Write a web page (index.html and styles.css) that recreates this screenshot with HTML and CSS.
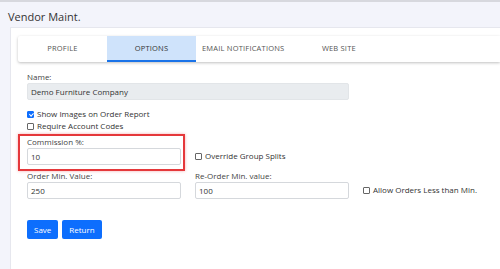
FILE: index.html
```html
<!DOCTYPE html>
<html lang="en">
<head>
    <meta charset="UTF-8">
    <meta name="viewport" content="width=device-width, initial-scale=1.0">
    <title>Vendor Maint.</title>
    <link rel="stylesheet" href="styles.css">
</head>
<body>
    <div class="topbar"></div>
    <h1>Vendor Maint.</h1>
    <div class="card">
        <div class="tabs">
            <div class="tab">Profile</div>
            <div class="tab active">Options</div>
            <div class="tab">Email Notifications</div>
            <div class="tab">Web Site</div>
        </div>
        <form class="form">
            <div class="field wide">
                <label>Name:</label>
                <input type="text" value="Demo Furniture Company" disabled>
            </div>
            <div class="checks">
                <label class="check"><input type="checkbox" checked> Show Images on Order Report</label>
                <label class="check"><input type="checkbox"> Require Account Codes</label>
            </div>
            <div class="grid">
                <div class="field highlight">
                    <label>Commission %:</label>
                    <input type="text" value="10">
                </div>
                <label class="check inline"><input type="checkbox"> Override Group Splits</label>
                <div></div>

                <div class="field">
                    <label>Order Min. Value:</label>
                    <input type="text" value="250">
                </div>
                <div class="field">
                    <label>Re-Order Min. value:</label>
                    <input type="text" value="100">
                </div>
                <label class="check inline"><input type="checkbox"> Allow Orders Less than Min.</label>
            </div>
            <div class="buttons">
                <button type="button">Save</button>
                <button type="button">Return</button>
            </div>
        </form>
    </div>
</body>
</html>
```

FILE: styles.css
```css
body {
    font-family: "Open Sans", "Liberation Sans", sans-serif;
    margin: 0;
    padding: 0;
    height: 269px;
    overflow: hidden;
    background-color: #f3f4fb;
    color: #333;
}
.topbar {
    height: 2px;
    background: #d7d8de;
}
h1 {
    margin: 0;
    padding: 0 8px;
    height: 25px;
    line-height: 30px;
    font-size: 11px;
    font-weight: normal;
    color: #333;
}
.card {
    margin-left: 10px;
    height: 242px;
    background: #fff;
    border-top: 1px solid #e6e7ee;
    border-left: 1px solid #e6e7ee;
    padding: 8px 0 0 7px;
    box-sizing: border-box;
}
.tabs {
    display: flex;
    height: 26px;
    background: #fff;
    border-radius: 2px 0 0 2px;
    box-shadow: 0 1px 3px rgba(0,0,0,0.25);
}
.tab {
    min-width: 77px;
    padding: 0 6px;
    text-align: center;
    line-height: 25px;
    font-size: 7.5px;
    text-transform: uppercase;
    letter-spacing: 0.2px;
    color: #555;
    border-bottom: 2px solid transparent;
    box-sizing: content-box;
}
.tab:last-child {
    min-width: 85px;
}
.tab.active {
    background: #cfe3fb;
    color: #333;
    border-bottom-color: #1a73e8;
}
.form {
    padding: 10px 0 0 9px;
}
.field {
    display: flex;
    flex-direction: column;
    width: 154px;
}
.field.wide {
    width: 322px;
}
.field label {
    font-size: 8px;
    line-height: 10px;
    margin-bottom: 1px;
    color: #444;
}
.field input {
    height: 17px;
    padding: 0 3px;
    border: 1px solid #d5d8dc;
    border-radius: 2px;
    box-sizing: border-box;
    font-family: inherit;
    font-size: 8px;
    color: #333;
    background: #fff;
}
.field input:disabled {
    background: #e9ecef;
    border-color: #e2e5e8;
}
.checks {
    margin-top: 8px;
}
.check {
    display: flex;
    align-items: center;
    font-size: 8px;
    line-height: 12px;
    color: #333;
}
.check input {
    appearance: none;
    position: relative;
    width: 7px;
    height: 7px;
    margin: 0 3px 0 0;
    border: 1px solid #666;
    border-radius: 1px;
    background: #fff;
    box-sizing: border-box;
}
.check input:checked {
    background: #0d6efd;
    border-color: #0d6efd;
}
.check input:checked::after {
    content: "";
    position: absolute;
    left: 1.5px;
    top: 0;
    width: 1.5px;
    height: 3px;
    border: solid #fff;
    border-width: 0 1px 1px 0;
    transform: rotate(45deg);
}
.grid {
    display: grid;
    grid-template-columns: 154px 154px auto;
    column-gap: 14px;
    row-gap: 6px;
    margin-top: 5px;
}
.check.inline {
    align-self: end;
    margin-bottom: 3px;
}
.highlight {
    position: relative;
}
.highlight::before {
    content: "";
    position: absolute;
    top: -3px;
    left: -9px;
    right: -4px;
    bottom: -6px;
    border: 2px solid #e5383b;
    box-shadow: 0 0 3px rgba(229,56,59,0.4);
    pointer-events: none;
}
.buttons {
    display: flex;
    gap: 4px;
    margin-top: 21px;
}
.buttons button {
    height: 19px;
    padding: 0 7px;
    border: none;
    border-radius: 2px;
    background: #0d6efd;
    color: #fff;
    font-family: inherit;
    font-size: 8px;
}
```
